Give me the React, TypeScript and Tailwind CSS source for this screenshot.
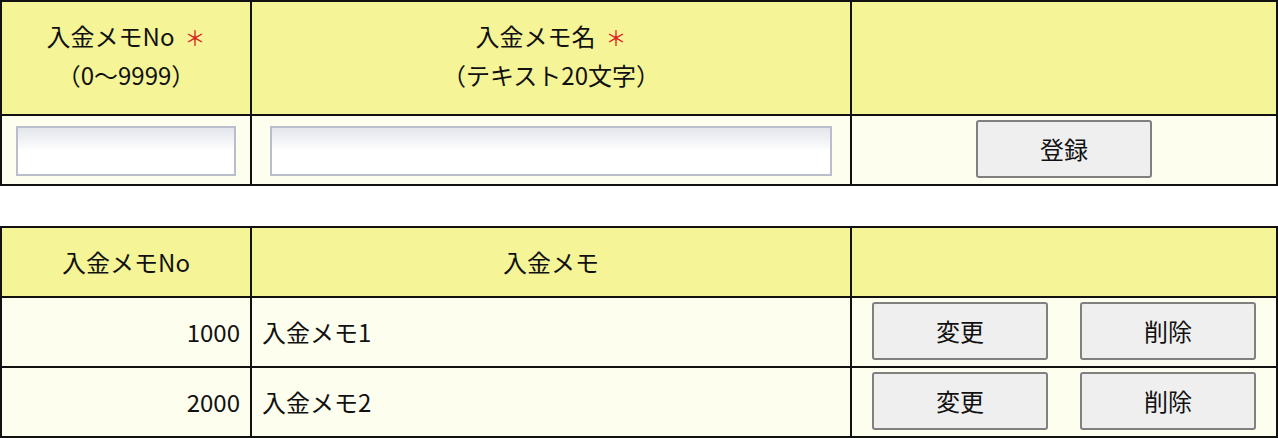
import React from "react";

const font = { fontFamily: '"Noto Sans CJK JP", "Noto Sans", sans-serif' };

function Req() {
  return <span className="ml-[10px] text-[21px] text-[#dd2222]">＊</span>;
}

function Btn({ label }: { label: string }) {
  return (
    <button className="h-[58px] w-[176px] rounded-[3px] border-2 border-[#808080] bg-[#efefef] text-[24px] leading-none text-[#111]">
      {label}
    </button>
  );
}

function Input({ w }: { w: string }) {
  return (
    <input
      type="text"
      className={`${w} h-[50px] border-2 border-[#b9bdcc] bg-[linear-gradient(to_bottom,#e2e5eb,#ffffff_50%)] outline-none`}
    />
  );
}

const rows = [
  { no: "1000", name: "入金メモ1" },
  { no: "2000", name: "入金メモ2" },
];

export default function App() {
  return (
    <div className="w-[1278px] bg-white text-[24px] text-[#111]" style={font}>
      {/* 登録フォーム */}
      <div className="border-2 border-[#111]">
        <div className="flex h-[112px] bg-[#f5f598]">
          <div className="flex w-[250px] flex-col items-center justify-center border-r-2 border-[#111] pb-[6px] leading-[38px]">
            <div>
              入金メモNo
              <Req />
            </div>
            <div>（0〜9999）</div>
          </div>
          <div className="flex w-[600px] flex-col items-center justify-center border-r-2 border-[#111] pb-[6px] leading-[38px]">
            <div>
              入金メモ名
              <Req />
            </div>
            <div>（テキスト20文字）</div>
          </div>
          <div className="flex-1" />
        </div>
        <div className="flex h-[70px] border-t-2 border-[#111] bg-[#fefeee]">
          <div className="flex w-[250px] justify-center border-r-2 border-[#111] pt-[10px]">
            <Input w="w-[220px]" />
          </div>
          <div className="flex w-[600px] justify-center border-r-2 border-[#111] pt-[10px]">
            <Input w="w-[562px]" />
          </div>
          <div className="flex flex-1 justify-center pt-[4px]">
            <Btn label="登録" />
          </div>
        </div>
      </div>

      {/* 一覧 */}
      <div className="mt-[40px] border-2 border-[#111]">
        <div className="flex h-[68px] bg-[#f5f598]">
          <div className="flex w-[250px] items-center justify-center border-r-2 border-[#111]">入金メモNo</div>
          <div className="flex w-[600px] items-center justify-center border-r-2 border-[#111]">入金メモ</div>
          <div className="flex-1" />
        </div>
        {rows.map((r) => (
          <div key={r.no} className="flex h-[70px] border-t-2 border-[#111] bg-[#fefeee]">
            <div className="flex w-[250px] items-center justify-end border-r-2 border-[#111] pr-[10px]">{r.no}</div>
            <div className="flex w-[600px] items-center border-r-2 border-[#111] pl-[10px]">{r.name}</div>
            <div className="flex flex-1 justify-between px-[20px] pt-[4px]">
              <Btn label="変更" />
              <Btn label="削除" />
            </div>
          </div>
        ))}
      </div>
    </div>
  );
}
